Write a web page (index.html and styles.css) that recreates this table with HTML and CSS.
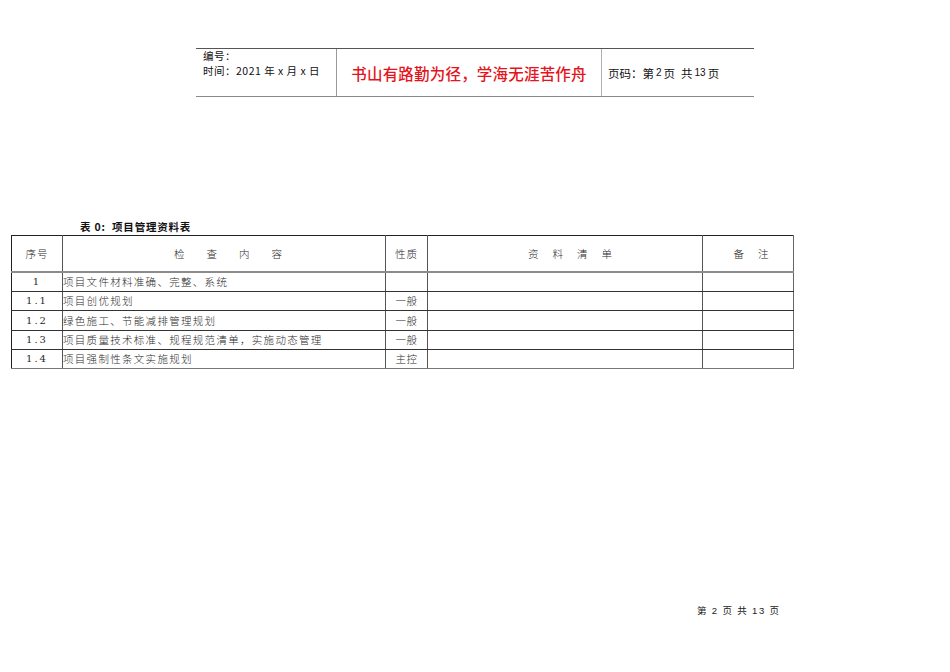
FILE: index.html
```html
<!DOCTYPE html>
<html lang="zh-CN">
<head>
<meta charset="utf-8">
<title>项目管理资料表</title>
<link rel="stylesheet" href="styles.css">
</head>
<body>
<div class="page">
  <div class="doc-head">
    <div class="cell cell-left">
      <div class="line">编号：</div>
      <div class="line">时间：2021 年 x 月 x 日</div>
    </div>
    <div class="cell cell-mid">书山有路勤为径，学海无涯苦作舟</div>
    <div class="cell cell-right">页码：第<span class="num">2</span>页<span class="gap"></span>共<span class="num">13</span>页</div>
  </div>

  <div class="table-title">表 0:&nbsp; 项目管理资料表</div>

  <table class="data">
    <colgroup>
      <col class="c1"><col class="c2"><col class="c3"><col class="c4"><col class="c5">
    </colgroup>
    <thead>
      <tr>
        <th class="h-no">序号</th>
        <th class="h-content">检查内容</th>
        <th class="h-type">性质</th>
        <th class="h-list">资料清单</th>
        <th class="h-note">备注</th>
      </tr>
    </thead>
    <tbody>
      <tr><td class="no">1</td><td class="txt">项目文件材料准确、完整、系统</td><td class="type"></td><td></td><td></td></tr>
      <tr><td class="no">1.1</td><td class="txt">项目创优规划</td><td class="type">一般</td><td></td><td></td></tr>
      <tr class="tall"><td class="no">1.2</td><td class="txt">绿色施工、节能减排管理规划</td><td class="type">一般</td><td></td><td></td></tr>
      <tr><td class="no">1.3</td><td class="txt">项目质量技术标准、规程规范清单，实施动态管理</td><td class="type">一般</td><td></td><td></td></tr>
      <tr><td class="no">1.4</td><td class="txt">项目强制性条文实施规划</td><td class="type">主控</td><td></td><td></td></tr>
    </tbody>
  </table>

  <div class="footer">第 <span class="fnum">2</span> 页 共 <span class="fnum">13</span> 页</div>
</div>
</body>
</html>
```

FILE: styles.css
```css
html, body {
  margin: 0;
  padding: 0;
  background: #ffffff;
}

body {
  font-family: "Noto Sans CJK SC", "Liberation Sans", sans-serif;
  color: #111;
}

.page {
  width: 950px;
  height: 672px;
  padding-top: 48px;
  box-sizing: border-box;
}

/* ---------- top document header ---------- */
.doc-head {
  margin-left: 196px;
  width: 558px;
  height: 49px;
  display: flex;
  border-top: 1px solid #555;
  border-bottom: 1.5px solid #8a8a8a;
  box-sizing: border-box;
}

.cell {
  box-sizing: border-box;
  display: flex;
}

.cell-left {
  width: 141px;
  flex-direction: column;
  gap: 1px;
  padding: 0 0 0 7px;
  font-size: 10.5px;
  letter-spacing: 0.5px;
  color: #111;
  border-right: 1.5px solid #9a9a9a;
}

.cell-left .line {
  height: 14px;
  line-height: 14px;
}

.cell-mid {
  width: 265px;
  align-items: center;
  justify-content: center;
  padding-top: 0;
  font-size: 15.5px;
  font-weight: 500;
  color: #e4141c;
  border-right: 1.5px solid #b0b0b0;
  letter-spacing: 0.2px;
}

.cell-right {
  flex: 1;
  align-items: center;
  padding: 0 0 0 6px;
  font-size: 11.5px;
  color: #111;
  white-space: nowrap;
}

.cell-right .num {
  font-family: "Liberation Sans", sans-serif;
  font-size: 10px;
  margin: 0 2px;
}

.cell-right .gap {
  display: inline-block;
  width: 6px;
}

/* ---------- table title ---------- */
.table-title {
  margin: 123px 0 0 80px;
  font-size: 10.5px;
  line-height: 14px;
  font-weight: 700;
  letter-spacing: 0.8px;
  color: #111;
}

/* ---------- data table ---------- */
table.data {
  margin: 1px 0 0 11px;
  width: 782px;
  border-collapse: collapse;
  table-layout: fixed;
  font-size: 10.5px;
  font-weight: 300;
  color: #2a2a2a;
}

col.c1 { width: 51px; }
col.c2 { width: 323px; }
col.c3 { width: 42px; }
col.c4 { width: 275px; }
col.c5 { width: 91px; }

table.data th,
table.data td {
  border-left: 1.5px solid #555;
  border-right: 1.5px solid #555;
  border-top: 1px solid #333;
  border-bottom: 1px solid #333;
  padding: 0;
  white-space: nowrap;
  overflow: hidden;
}

table.data thead th {
  height: 35px;
  font-weight: 300;
  border-top: 1px solid #222;
  border-bottom: 2px solid #8c8c8c;
  text-align: center;
}

table.data th:first-child,
table.data td:first-child {
  border-left: 1px solid #222;
}

table.data th:last-child,
table.data td:last-child {
  border-right: 1.5px solid #666;
}

.h-no { letter-spacing: 1px; }
.h-content { letter-spacing: 22px; text-indent: 30px; }
.h-type { letter-spacing: 1px; }
.h-list { letter-spacing: 14px; text-indent: 24px; }
.h-note { letter-spacing: 14px; text-indent: 20px; }

table.data tbody td {
  height: 18px;
  line-height: 18px;
}

table.data tbody tr.tall td {
  height: 19px;
}

table.data tbody tr:last-child td {
  border-bottom: 1.5px solid #777;
}

td.no {
  text-align: center;
  letter-spacing: 2px;
  font-family: "DejaVu Serif", "Liberation Serif", serif;
  font-size: 10px;
}

td.txt {
  padding-left: 4px;
  letter-spacing: 1.3px;
}

td.type {
  text-align: center;
  letter-spacing: 0.5px;
}

/* ---------- footer ---------- */
.footer {
  margin: 234px 0 0 697px;
  font-size: 9.5px;
  line-height: 14px;
  color: #222;
  letter-spacing: 1.6px;
}

.footer .fnum {
  font-family: "Liberation Sans", sans-serif;
  font-size: 9.5px;
}
```
